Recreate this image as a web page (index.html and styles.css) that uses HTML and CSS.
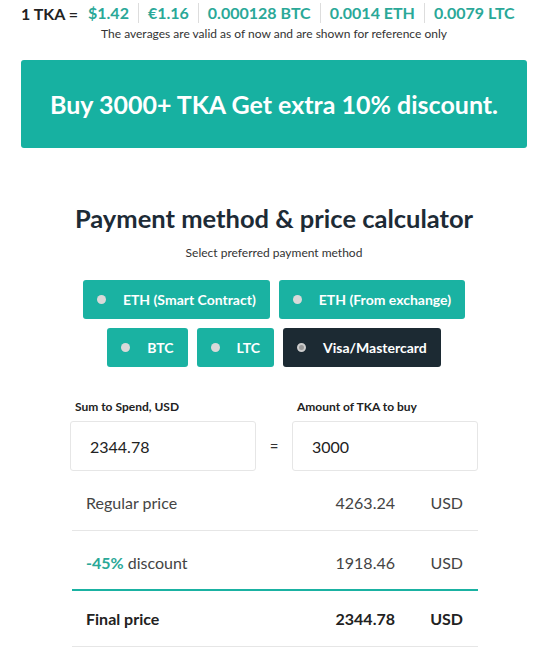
FILE: index.html
```html
<!DOCTYPE html>
<html lang="en">
<head>
  <meta charset="UTF-8" />
  <title>TKA – Price Calculator</title>
  <link rel="stylesheet" href="styles.css">
</head>
<body>

  <div class="page">
    <div class="rates">
      <span class="rate-main">1 TKA =</span>
      <span class="rate">$1.42</span>
      <span class="rate">€1.16</span>
      <span class="rate">0.000128 BTC</span>
      <span class="rate">0.0014 ETH</span>
      <span class="rate">0.0079 LTC</span>
    </div>
    <p class="rates-note">The averages are valid as of now and are shown for reference only</p>

    <div class="banner">Buy 3000+ TKA Get extra 10% discount.</div>

    <h1>Payment method &amp; price calculator</h1>
    <p class="subtitle">Select preferred payment method</p>

    <div class="methods">
      <div class="method-row">
        <button class="method"><span class="dot"></span>ETH (Smart Contract)</button>
        <button class="method"><span class="dot"></span>ETH (From exchange)</button>
      </div>
      <div class="method-row">
        <button class="method"><span class="dot"></span>BTC</button>
        <button class="method"><span class="dot"></span>LTC</button>
        <button class="method active"><span class="dot"></span>Visa/Mastercard</button>
      </div>
    </div>

    <div class="calc">
      <div class="field">
        <label for="sum">Sum to Spend, USD</label>
        <input type="text" id="sum" value="2344.78" />
      </div>
      <div class="equals">=</div>
      <div class="field">
        <label for="amount">Amount of TKA to buy</label>
        <input type="text" id="amount" value="3000" />
      </div>
    </div>

    <div class="summary">
      <div class="line">
        <span class="name">Regular price</span>
        <span class="value">4263.24</span>
        <span class="cur">USD</span>
      </div>
      <div class="line line-discount">
        <span class="name"><b class="pct">-45%</b> discount</span>
        <span class="value">1918.46</span>
        <span class="cur">USD</span>
      </div>
      <div class="line line-final">
        <span class="name">Final price</span>
        <span class="value">2344.78</span>
        <span class="cur">USD</span>
      </div>
    </div>
  </div>

</body>
</html>
```

FILE: styles.css
```css
* { box-sizing: border-box; margin: 0; padding: 0; }
body {
  font-family: Lato, 'Open Sans', sans-serif;
  background: #fff;
  color: #333;
}

.page {
  width: 506px;
  margin-left: 21px;
}

.rates {
  display: flex;
  align-items: center;
  height: 25px;
  padding-top: 1px;
  font-size: 16px;
  font-weight: 700;
  white-space: nowrap;
}

.rate-main {
  color: #222;
  margin-right: 10px;
  flex-shrink: 0;
}

.rate {
  flex-shrink: 0;
  color: #2aa898;
  padding: 0 9px;
  border-left: 1px solid #ddd;
  line-height: 20px;
}

.rate:nth-child(2) {
  border-left: none;
  padding-left: 0;
}

.rates-note {
  font-size: 12px;
  color: #333;
  text-align: center;
  margin-top: 1px;
}

.banner {
  margin-top: 19px;
  height: 88px;
  background: #17b1a1;
  border-radius: 3px;
  color: #fff;
  font-size: 25px;
  font-weight: 700;
  display: flex;
  align-items: center;
  justify-content: center;
}

h1 {
  margin-top: 53px;
  font-size: 25.5px;
  font-weight: 700;
  color: #1d2b36;
  text-align: center;
  line-height: 34px;
}

.subtitle {
  margin-top: 10px;
  font-size: 12px;
  text-align: center;
  color: #333;
}

.methods {
  margin-top: 20px;
  display: flex;
  flex-direction: column;
  align-items: center;
  gap: 9px;
  padding-left: 0;
}

.method-row {
  display: flex;
  gap: 9px;
}

.method {
  height: 39px;
  display: flex;
  align-items: center;
  padding: 0 14px;
  background: #1ab2a2;
  color: #fff;
  border: none;
  border-radius: 3px;
  font-family: inherit;
  font-size: 14px;
  font-weight: 700;
}

.method .dot {
  width: 9px;
  height: 9px;
  border-radius: 50%;
  background: #d9d9d9;
  margin-right: 17px;
}

.method.active {
  background: #1c2a33;
}

.method.active .dot {
  background: #999;
  border: 2px solid #ccc;
}

.calc {
  margin: 32px 0 0 49px;
  width: 408px;
  display: flex;
  align-items: flex-end;
}

.field {
  width: 186px;
}

.field label {
  display: block;
  font-size: 12px;
  font-weight: 700;
  color: #222;
  padding-left: 5px;
  margin-bottom: 7px;
}

.field input {
  width: 100%;
  height: 50px;
  border: 1px solid #e6e6e6;
  border-radius: 3px;
  padding: 0 19px;
  font-family: inherit;
  font-size: 16px;
  color: #222;
}

.equals {
  width: 36px;
  height: 50px;
  line-height: 50px;
  text-align: center;
  font-size: 15px;
  color: #333;
}

.summary {
  margin: 4px 0 0 51px;
  width: 406px;
}

.line {
  display: flex;
  align-items: center;
  height: 56px;
  padding: 0 15px 0 14px;
  border-bottom: 1px solid #e6e6e6;
  font-size: 16px;
  color: #444;
}

.line-discount {
  height: 60px;
  padding-top: 4px;
  border-bottom: 2px solid #1ab2a2;
}

.line-final {
  font-weight: 700;
  color: #222;
}

.name {
  flex: 1;
}

.pct {
  color: #2aa898;
}

.value {
  text-align: right;
}

.cur {
  width: 68px;
  text-align: right;
}
```
